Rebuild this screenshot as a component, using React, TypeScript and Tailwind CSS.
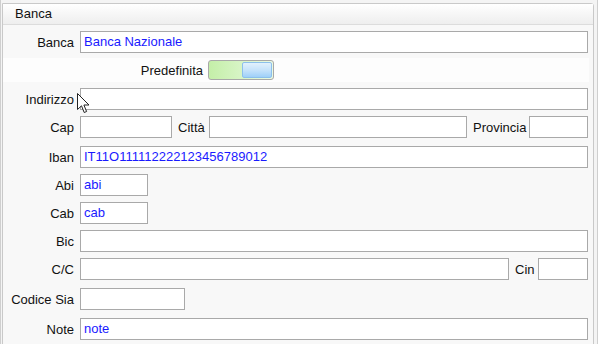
import React from "react";

const font = { fontFamily: '"Liberation Sans", Arial, sans-serif' };

function Field({ w, value }: { w?: string; value?: string }) {
    return (
        <div
            className={`h-[22px] border border-[#a9a9a9] bg-white pl-[3px] flex items-center text-[13px] text-[#1a1aff] ${w ?? "flex-1"}`}
        >
            {value}
        </div>
    );
}

function Label({ children, className = "" }: { children: React.ReactNode; className?: string }) {
    return <div className={`text-[13px] text-[#111] leading-none ${className}`}>{children}</div>;
}

function Row({ label, mt, children }: { label: string; mt: string; children: React.ReactNode }) {
    return (
        <div className={`flex items-center pr-[5px] ${mt}`}>
            <Label className="w-[71px] text-right">{label}</Label>
            <div className="w-[6px]" />
            <div className="flex-1 flex items-center">{children}</div>
        </div>
    );
}

export default function App() {
    return (
        <div
            style={font}
            className="relative w-[598px] h-[344px] overflow-hidden bg-[#f4f4f4] border-l border-r border-[#cfcfcf]"
        >
            <div className="ml-[1px] mt-[3px] w-[592px] h-[360px] border border-[#c9c9c9] rounded-tr-[3px] bg-[#f8f8f8]">
                {/* Header */}
                <div className="h-[21px] bg-gradient-to-b from-white to-[#eeeeee] border-b border-[#dcdcdc] flex items-center pl-[12px]">
                    <span className="text-[13px] text-[#111]">Banca</span>
                </div>

                <div>
                    <Row label="Banca" mt="mt-[6px]">
                        <Field value="Banca Nazionale" />
                    </Row>

                    {/* Predefinita */}
                    <div className="mt-[5px] mr-[4px] h-[24px] bg-[#fdfdfd] flex items-center">
                        <Label className="w-[200px] text-right">Predefinita</Label>
                        <div className="w-[5px]" />
                        <div className="w-[66px] h-[20px] rounded-[3px] border border-[#a8a8a8] bg-gradient-to-r from-[#c4efa8] to-[#eaf9e2] flex justify-end p-[1px]">
                            <div className="w-[30px] h-full rounded-[2px] border border-[#8cc0ec] bg-gradient-to-b from-[#e2f1fd] via-[#c6e3fb] to-[#9fd0f8]" />
                        </div>
                    </div>

                    <Row label="Indirizzo" mt="mt-[6px]">
                        <Field />
                    </Row>

                    <Row label="Cap" mt="mt-[6px]">
                        <Field w="w-[92px]" />
                        <Label className="ml-[6px] w-[31px]">Città</Label>
                        <Field />
                        <Label className="ml-[6px] w-[56px]">Provincia</Label>
                        <Field w="w-[59px]" />
                    </Row>

                    <Row label="Iban" mt="mt-[8px]">
                        <Field value="IT11O111112222123456789012" />
                    </Row>

                    <Row label="Abi" mt="mt-[6px]">
                        <Field w="w-[68px]" value="abi" />
                    </Row>

                    <Row label="Cab" mt="mt-[6px]">
                        <Field w="w-[68px]" value="cab" />
                    </Row>

                    <Row label="Bic" mt="mt-[6px]">
                        <Field />
                    </Row>

                    <Row label="C/C" mt="mt-[6px]">
                        <Field />
                        <Label className="ml-[6px] w-[23px]">Cin</Label>
                        <Field w="w-[50px]" />
                    </Row>

                    <Row label="Codice Sia" mt="mt-[8px]">
                        <Field w="w-[105px]" />
                    </Row>

                    <Row label="Note" mt="mt-[8px]">
                        <Field value="note" />
                    </Row>
                </div>
            </div>

            {/* mouse pointer */}
            <svg className="absolute left-[76px] top-[93px]" width="13" height="21" viewBox="0 0 13 21">
                <path
                    d="M0.5 0.5 L0.5 16.5 L4.5 12.8 L7.2 19.5 L9.6 18.5 L6.9 12 L12 12 Z"
                    fill="white"
                    stroke="#222"
                    strokeWidth="1"
                    strokeLinejoin="miter"
                />
            </svg>
        </div>
    );
}
